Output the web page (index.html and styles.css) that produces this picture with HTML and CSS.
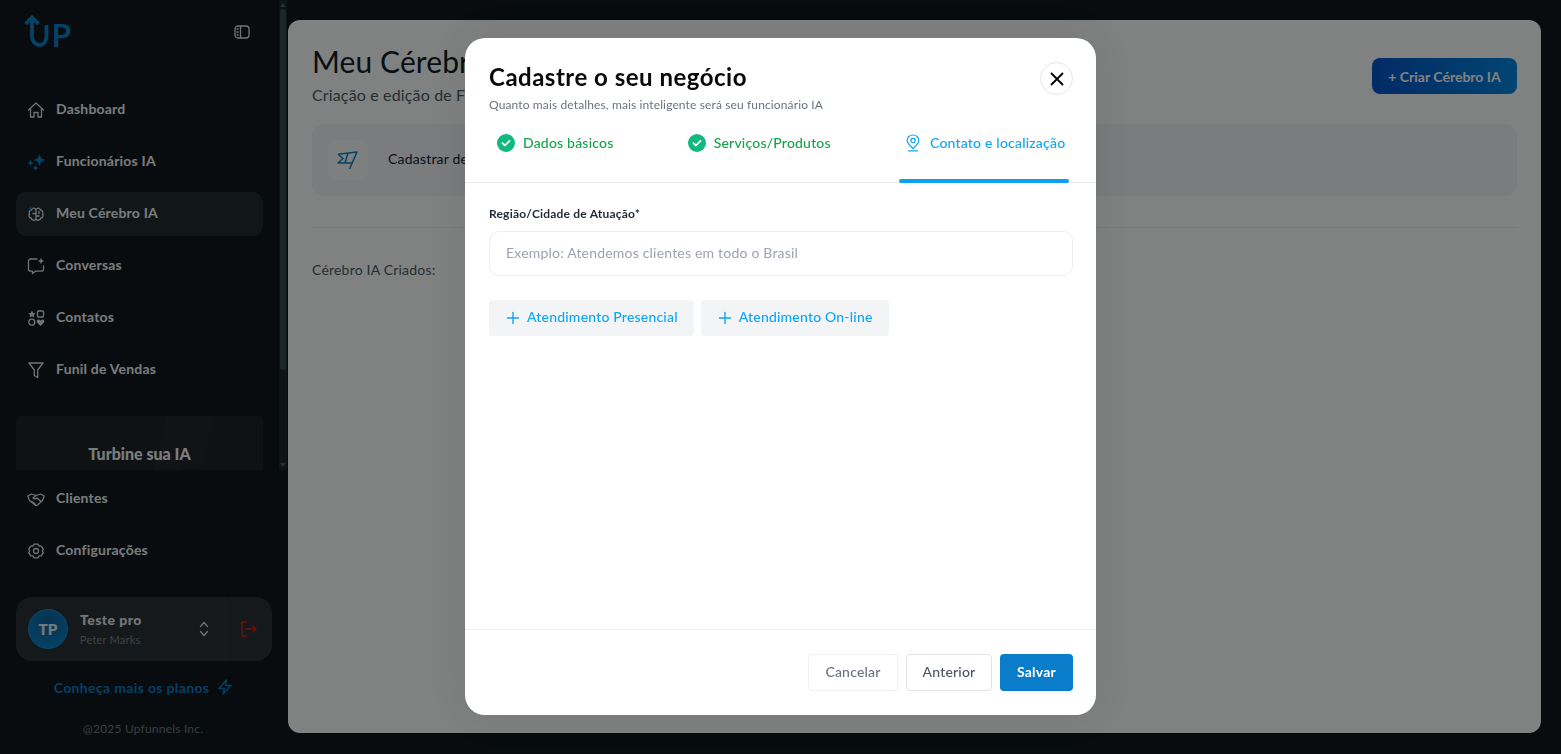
FILE: index.html
```html
<!DOCTYPE html>
<html lang="pt-BR">
<head>
<meta charset="utf-8">
<title>Meu Cérebro IA</title>
<link rel="stylesheet" href="styles.css">
</head>
<body>
<div class="app">
  <aside class="sidebar">
    <div class="nav-scroll">
      <div class="brand">
        <svg class="logo" width="60" height="48" viewBox="0 0 60 48">
          <path class="logo-stroke" d="M10 3V21C10 26.500 13.500 30 17.500 30C21.500 30 24.500 26.500 24.500 21V10"/>
          <path class="logo-stroke" d="M3.500 9L10 2.500L16.500 9"/>
          <text class="logo-text" x="29" y="32" textLength="21" lengthAdjust="spacingAndGlyphs">P</text>
        </svg>
        <button class="collapse" aria-label="Recolher">
          <svg width="16" height="14" viewBox="0 0 16 14" class="ico-line"><rect x="1" y="1" width="14" height="12" rx="3"/><path d="M6.500 1V13M3 4H4.200M3 7H4.200M3 10H4.200"/></svg>
        </button>
      </div>
      <nav class="nav">
        <a class="nav-item"><svg width="18" height="18" viewBox="0 0 18 18" class="ico-line"><path d="M1.500 9L9 2L16.500 9M3.500 7.500V16H7V11.500H11V16H14.500V7.500"/></svg><span>Dashboard</span></a>
        <a class="nav-item"><svg width="18" height="18" viewBox="0 0 18 18" class="ico-fill"><path d="M12.500 1L14.300 5.200L18 7L14.300 8.800L12.500 13L10.700 8.800L7 7L10.700 5.200Z"/><path d="M3.500 6.800L4.600 8.900L6.800 10L4.600 11.100L3.500 13.200L2.400 11.100L.200 10L2.400 8.900Z"/><path d="M8.500 12L9.400 14.100L11.500 15L9.400 15.900L8.500 18L7.600 15.900L5.500 15L7.600 14.100Z"/></svg><span>Funcionários IA</span></a>
        <a class="nav-item active"><svg width="18" height="18" viewBox="0 0 18 18" class="ico-line"><path d="M9 4.500C8 2.500 5 2.500 4.500 5C2.500 5.200 1.500 7.500 2.500 9C1.200 10.500 2.200 13 4.200 13C4.700 15.500 8 16 9 14ZM9 4.500C10 2.500 13 2.500 13.500 5C15.500 5.200 16.500 7.500 15.500 9C16.800 10.500 15.800 13 13.800 13C13.300 15.500 10 16 9 14ZM9 8.500H6M9 11H12M12 6.500V8.500"/><path class="dot" d="M3.500 1L4.300 2.700L6 3.500L4.300 4.300L3.500 6L2.700 4.300L1 3.500L2.700 2.700Z"/></svg><span>Meu Cérebro IA</span></a>
        <a class="nav-item"><svg width="18" height="18" viewBox="0 0 18 18" class="ico-line"><path d="M10 2H3.500C2.500 2 1.500 3 1.500 4V12.500C1.500 13.500 2.500 14.200 3.500 14.200H5.500V16.500L8.500 14.200H14.500C15.500 14.200 16.500 13.500 16.500 12.500V9"/><path class="solid" d="M14 .800L14.900 3.100L17.200 4L14.900 4.900L14 7.200L13.100 4.900L10.800 4L13.100 3.100Z"/></svg><span>Conversas</span></a>
        <a class="nav-item"><svg width="18" height="18" viewBox="0 0 18 18" class="ico-line"><path class="solid" d="M5 1.500L6.200 4L8.700 4.300L6.800 6.100L7.300 8.500L5 7.300L2.700 8.500L3.200 6.100L1.300 4.300L3.800 4Z"/><rect x="10.500" y="2" width="6" height="6" rx="1"/><circle cx="4.800" cy="13.200" r="3"/><path class="solid" d="M13.500 17L10 13.500C9 12 10.500 10 12.200 10.700L13.500 11.500L14.800 10.700C16.500 10 18 12 17 13.500Z"/></svg><span>Contatos</span></a>
        <a class="nav-item"><svg width="18" height="18" viewBox="0 0 18 18" class="ico-line"><path d="M2 2H16L10.700 9V16.500L7.300 14.500V9Z"/></svg><span>Funil de Vendas</span></a>
      </nav>
      <section class="promo">
        <h3 class="promo-title">Turbine sua IA</h3>
      </section>
    </div>
    <div class="scrollbar">
      <i class="arrow-up"></i>
      <i class="thumb"></i>
      <i class="arrow-down"></i>
    </div>
    <nav class="nav nav-lower">
      <a class="nav-item"><svg width="18" height="18" viewBox="0 0 18 18" class="ico-line"><path d="M.800 6L4.500 4L9 5.500L13.500 4L17.200 6L15.500 10.500L10.500 15C9.500 15.800 8.500 15.500 7.500 14.500L2.500 10.500ZM9 5.500L6 8C7 9.500 8.500 9 10 8L14 11.500M5 11.500L8 14M7.500 9.500"/></svg><span>Clientes</span></a>
      <a class="nav-item"><svg width="18" height="18" viewBox="0 0 18 18" class="ico-line"><path d="M7 2.200H11L12.100 4.100L14.300 4.100L16.300 7.300L15.200 9L16.300 10.700L14.300 13.900L12.100 13.900L11 15.800H7L5.900 13.900L3.700 13.900L1.700 10.700L2.800 9L1.700 7.300L3.700 4.100L5.900 4.100Z"/><circle cx="9" cy="9" r="2.500"/></svg><span>Configurações</span></a>
    </nav>
    <div class="user-card">
      <div class="user-main">
        <div class="avatar">TP</div>
        <div class="user-info">
          <div class="user-name">Teste pro</div>
          <div class="user-mail">Peter Marks</div>
        </div>
        <svg width="12" height="16" viewBox="0 0 12 16" class="ico-line"><path d="M2.500 5.500L6 1.500L9.500 5.500M2.500 10.500L6 14.500L9.500 10.500"/></svg>
      </div>
      <button class="logout" aria-label="Sair">
        <svg width="16" height="16" viewBox="0 0 16 16" class="ico-red"><path d="M5.500 1H1V15H5.500M4.500 8H15M12 5L15 8L12 11"/></svg>
      </button>
    </div>
    <a class="plans">Conheça mais os planos
      <svg width="16" height="16" viewBox="0 0 16 16" class="ico-blue"><path d="M9.500 1L2 9.500H7.500L6 15L14 6.500H8.500Z"/></svg>
    </a>
    <p class="copy">@2025 Upfunnels Inc.</p>
  </aside>

  <main class="panel">
    <header class="panel-head">
      <div>
        <h1 class="panel-title">Meu Cérebro IA</h1>
        <p class="panel-sub">Criação e edição de Funcionários IA</p>
      </div>
      <button class="create">+ Criar Cérebro IA</button>
    </header>
    <div class="notice">
      <div class="notice-icon">
        <svg width="22" height="22" viewBox="0 0 22 22" class="ico-flag"><path d="M1 5.300L20 3L12.500 20M1 5.300L6 9.500L1 14H16M11 4L8 14"/></svg>
      </div>
      <span class="notice-text">Cadastrar detalhes do seu negócio para usar no seu funcionário</span>
    </div>
    <hr class="rule">
    <p class="created">Cérebro IA Criados:</p>
  </main>
</div>

<div class="overlay">
  <div class="modal">
    <div class="modal-head">
      <div>
        <h2 class="modal-title">Cadastre o seu negócio</h2>
        <p class="modal-sub">Quanto mais detalhes, mais inteligente será seu funcionário IA</p>
      </div>
      <button class="close" aria-label="Fechar">
        <svg width="14" height="14" viewBox="0 0 14 14" class="ico-x"><path d="M1.500 1.500L12.500 12.500M12.500 1.500L1.500 12.500"/></svg>
      </button>
    </div>
    <div class="tabs">
      <div class="tab done">
        <svg width="18" height="18" viewBox="0 0 18 18"><circle cx="9" cy="9" r="9" class="check-bg"/><path d="M5.500 9.200L8 11.500L12.500 6.800" class="check"/></svg>
        <span>Dados básicos</span>
      </div>
      <div class="tab done">
        <svg width="18" height="18" viewBox="0 0 18 18"><circle cx="9" cy="9" r="9" class="check-bg"/><path d="M5.500 9.200L8 11.500L12.500 6.800" class="check"/></svg>
        <span>Serviços/Produtos</span>
      </div>
      <div class="tab current">
        <svg width="16" height="18" viewBox="0 0 16 18" class="ico-pin"><path d="M8 14.500C5 11.500 2.200 9.500 2.200 6.500C2.200 3.300 4.800 1 8 1C11.200 1 13.800 3.300 13.800 6.500C13.800 9.500 11 11.500 8 14.500Z"/><circle cx="8" cy="6.500" r="2.200"/><path d="M3.500 16.800H12.500"/></svg>
        <span>Contato e localização</span>
      </div>
    </div>
    <div class="modal-body">
      <label class="field-label" for="regiao">Região/Cidade de Atuação*</label>
      <input class="field-input" id="regiao" type="text" placeholder="Exemplo: Atendemos clientes em todo o Brasil">
      <div class="add-row">
        <button class="add"><svg width="14" height="14" viewBox="0 0 14 14" class="ico-plus"><path d="M7 1.500V12.500M1.500 7H12.500"/></svg><span>Atendimento Presencial</span></button>
        <button class="add"><svg width="14" height="14" viewBox="0 0 14 14" class="ico-plus"><path d="M7 1.500V12.500M1.500 7H12.500"/></svg><span>Atendimento On-line</span></button>
      </div>
    </div>
    <div class="modal-foot">
      <button class="btn btn-cancel">Cancelar</button>
      <button class="btn btn-prev">Anterior</button>
      <button class="btn btn-save">Salvar</button>
    </div>
  </div>
</div>
</body>
</html>
```
FILE: styles.css
```css
* { box-sizing: border-box; }
html, body { margin: 0; height: 100%; overflow: hidden; }
body { font-family: "Lato", "Open Sans", sans-serif; background: #0e131a; color: #111827; letter-spacing: .2px; }
h1, h2, h3, p { margin: 0; }
button, input { font-family: inherit; letter-spacing: inherit; cursor: pointer; }
svg { display: block; flex: none; fill: none; }

.app { display: flex; height: 754px; background: #0e131a; }

/* sidebar */
.sidebar { position: relative; width: 288px; flex: none; display: flex; flex-direction: column; }
.nav-scroll { height: 470px; overflow: hidden; padding: 0 25px 0 16px; flex: none; }
.scrollbar { position: absolute; left: 279px; top: 0; width: 8px; height: 470px; background: #1a2029; display: flex; flex-direction: column; align-items: center; }
.arrow-up { margin-top: 3px; border: 3px solid transparent; border-top: 0; border-bottom: 4px solid #4e5660; }
.thumb { margin-top: 2px; width: 6px; height: 361px; border-radius: 3px; background: #3a444e; }
.arrow-down { margin-top: auto; margin-bottom: 3px; border: 3px solid transparent; border-bottom: 0; border-top: 4px solid #4e5660; }
.brand { height: 88px; display: flex; align-items: flex-start; justify-content: space-between; padding-top: 15px; }
.logo { margin-left: 6px; }
.logo-stroke { stroke: #0a7ec8; stroke-width: 3.800; fill: none; }
.logo-text { font-family: "Open Sans", sans-serif; font-size: 32px; fill: #0a7ec8; font-weight: 600; letter-spacing: 0; }
.collapse { background: none; border: 0; padding: 0; margin: 10px 13px 0 0; }
.ico-line { stroke: #dfe3e8; stroke-width: 1.300; stroke-linecap: round; stroke-linejoin: round; }
.ico-line .solid { fill: #dfe3e8; stroke: none; }
.ico-line .dot { fill: #0a7ec8; stroke: none; }
.ico-fill { fill: #0a7ec8; }
.nav { display: flex; flex-direction: column; gap: 8px; }
.nav-item { height: 44px; display: flex; align-items: center; gap: 11px; padding: 0 11px; border-radius: 10px; color: #f1f3f5; font-size: 14px; font-weight: 700; }
.nav-item span { padding-bottom: 4px; }
.nav-item.active { background: #20262d; }
.promo { margin-top: 24px; height: 54px; padding-top: 26px; border-radius: 4px 4px 0 0; text-align: center; color: #f1f3f5;
  background: linear-gradient(105deg, transparent 58%, #1f2328 58%, #1f2328 68%, #1d2126 68%, #1d2126 76%, transparent 76%), #1b1e23; }
.promo-title { font-size: 16px; line-height: 24px; font-weight: 900; letter-spacing: 0; }
.nav-lower { padding: 7px 25px 0 16px; }
.user-card { margin: 24px 0 0 16px; width: 256px; height: 64px; display: flex; border-radius: 16px; background: #282c32; flex: none; }
.user-main { flex: 1; display: flex; align-items: center; padding: 0 14px 0 12px; border-right: 1px solid #2f343b; }
.avatar { width: 40px; height: 40px; border-radius: 50%; background: radial-gradient(circle at 50% 30%, #0b5fa0, #0a84cc); border: 1px solid #0d8fd8; color: #e6e8ea; display: flex; align-items: center; justify-content: center; font-weight: 800; font-size: 15px; flex: none; }
.user-info { flex: 1; margin-left: 12px; }
.user-name { font-size: 14px; font-weight: 900; color: #e5e7eb; line-height: 20px; letter-spacing: .45px; }
.user-mail { font-size: 11px; color: #7b8088; line-height: 16px; margin-top: 2px; }
.logout { width: 47px; background: none; border: 0; padding: 0; display: flex; align-items: center; justify-content: center; }
.ico-red { stroke: #e01818; stroke-width: 1.300; stroke-linecap: round; }
.plans { margin-top: 16px; height: 20px; display: flex; align-items: center; justify-content: center; gap: 8px; font-size: 14px; font-weight: 700; color: #0a78c8; padding-right: 1px; letter-spacing: .35px; }
.ico-blue { stroke: #0a78c8; stroke-width: 1.400; stroke-linejoin: round; }
.copy { margin-top: 24px; font-size: 12px; line-height: 16px; color: #707680; text-align: center; padding-right: 2px; }

/* main panel */
.panel { flex: 1; margin: 20px 20px 21px 0; padding: 21px 24px; border-radius: 12px; background: #fdfffe; }
.panel-head { display: flex; justify-content: space-between; align-items: flex-start; }
.panel-title { font-size: 30px; line-height: 40px; font-weight: 400; color: #111827; letter-spacing: .1px; }
.panel-sub { font-size: 16px; line-height: 24px; color: #4b5563; margin-top: 2px; letter-spacing: .15px; }
.create { margin-top: 17px; width: 145px; height: 36px; border: 0; border-radius: 8px; color: #fff; font-size: 14px; font-weight: 700; letter-spacing: 0; background: linear-gradient(90deg, #0450c8, #0084e0); }
.notice { margin-top: 17px; height: 72px; display: flex; align-items: center; gap: 20px; padding: 0 16px; border-radius: 12px; background: #f2f3f7; }
.notice-icon { width: 40px; height: 40px; border-radius: 8px; background: #fbfbfc; display: flex; align-items: center; justify-content: center; }
.ico-flag { stroke: #0a7ec8; stroke-width: 1.500; stroke-linejoin: round; }
.notice-text { font-size: 14px; color: #111827; padding-bottom: 4px; }
.rule { margin: 31px 0 0; border: 0; border-top: 1px solid #f0f1f3; }
.created { margin-top: 32px; font-size: 14px; line-height: 20px; color: #4b5563; }

/* modal */
.overlay { position: fixed; inset: 0; padding-top: 38px; display: flex; justify-content: center; align-items: flex-start; background: rgba(1, 5, 3, .5); }
.modal { width: 631px; height: 677px; background: #fff; border-radius: 20px; display: flex; flex-direction: column; box-shadow: 0 0 40px rgba(0, 0, 0, .08); }
.modal-head { display: flex; justify-content: space-between; align-items: flex-start; padding: 23px 23px 0 24px; }
.modal-title { font-size: 24px; line-height: 32px; font-weight: 700; color: #0a0a0a; letter-spacing: .5px; }
.modal-sub { margin-top: 4px; font-size: 12px; line-height: 16px; color: #6b7280; letter-spacing: .13px; }
.close { width: 33px; height: 33px; margin-top: 1px; border-radius: 50%; background: #fff; border: 1px solid #e5e7eb; padding: 0; display: flex; align-items: center; justify-content: center; }
.ico-x { stroke: #000; stroke-width: 1.800; stroke-linecap: round; }
.tabs { height: 70px; flex: none; padding: 10px 27px 0 26px; display: flex; justify-content: space-between; border-bottom: 1px solid #e9eaec; }
.tab { position: relative; height: 60px; display: flex; align-items: flex-start; gap: 8px; padding: 10px 5px 0 6px; font-size: 14px; line-height: 20px; font-weight: 500; white-space: nowrap; }
.tab.done { color: #16a34a; }
.tab.current { color: #0ea5f5; width: 170px; gap: 9px; padding: 10px 0 0 6px; }
.tab.current::after { content: ""; position: absolute; left: 0; right: 0; bottom: 0; height: 4px; border-radius: 2px; background: #0aa0f5; }
.tab svg { margin-top: 1px; }
.check-bg { fill: #10b981; }
.check { stroke: #fff; stroke-width: 1.800; stroke-linecap: round; stroke-linejoin: round; }
.ico-pin { stroke: #0ea5f5; stroke-width: 1.200; stroke-linecap: round; }
.modal-body { flex: 1; padding: 23px 23px 0 24px; }
.field-label { display: block; font-size: 12px; line-height: 16px; font-weight: 700; color: #1f2937; }
.field-input { display: block; margin-top: 9px; width: 100%; height: 45px; padding: 0 16px 2px; border: 1px solid #eceef1; border-radius: 10px; font-size: 14px; outline: 0; background: #fff; }
.field-input::placeholder { color: #9ca3af; opacity: 1; }
.add-row { display: flex; gap: 7px; margin-top: 24px; }
.add { height: 36px; display: flex; align-items: center; gap: 7px; padding: 0 16px 0 17px; border: 0; border-radius: 4px; background: #f3f4f6; color: #0ea5f5; font-size: 14px; font-weight: 500; }
.add span { padding-bottom: 4px; }
.ico-plus { stroke: #0ea5f5; stroke-width: 1.400; stroke-linecap: round; }
.modal-foot { flex: none; height: 86px; padding: 24px 23px 24px 24px; display: flex; justify-content: flex-end; gap: 8px; border-top: 1px solid #eceef0; }
.btn { height: 37px; border-radius: 4px; font-size: 14px; font-weight: 500; background: #fff; padding: 0 0 2px; }
.btn-cancel { width: 90px; border: 1px solid #eef0f3; color: #6b7280; }
.btn-prev { width: 86px; border: 1px solid #e2e3ea; color: #4b5563; }
.btn-save { width: 73px; border: 0; background: #0a7dca; color: #fff; font-weight: 700; }
```
